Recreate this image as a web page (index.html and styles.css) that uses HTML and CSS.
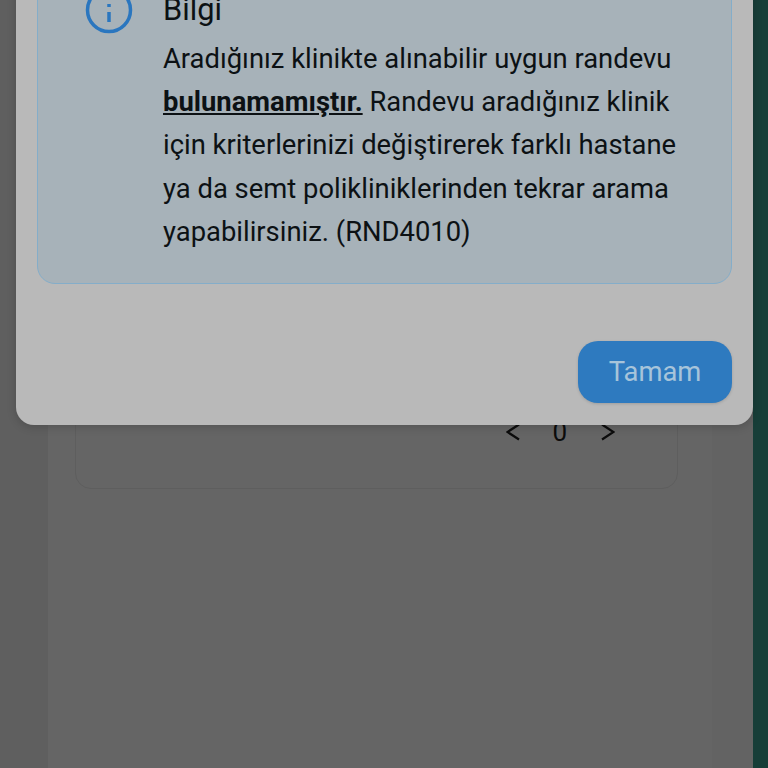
FILE: index.html
```html
<!DOCTYPE html>
<html lang="tr">
<head>
<meta charset="utf-8">
<title>Bilgi</title>
<link rel="stylesheet" href="styles.css">
</head>
<body>
<div class="screen">
  <div class="gutter"></div>
  <main class="main">
    <section class="card">
      <nav class="pager">
        <svg class="chev" viewBox="0 0 14 18" aria-hidden="true"><path d="M13 1.5 1.5 9 13 16.5"/></svg>
        <span class="page-num">0</span>
        <svg class="chev" viewBox="0 0 14 18" aria-hidden="true"><path d="M1 1.5 12.5 9 1 16.5"/></svg>
      </nav>
    </section>
  </main>
  <div class="gap"></div>
  <div class="strip"></div>

  <div class="dialog" role="dialog">
    <div class="info">
      <svg class="info-icon" viewBox="0 0 48 48" aria-hidden="true">
        <circle cx="24" cy="24" r="21.5"/>
        <path d="M24 26v10"/>
        <path d="M24 18v3"/>
      </svg>
      <div class="info-body">
        <h2 class="info-title">Bilgi</h2>
        <p class="info-text">Aradığınız klinikte alınabilir uygun randevu <strong>bulunamamıştır.</strong> Randevu aradığınız klinik için kriterlerinizi değiştirerek farklı hastane ya da semt polikliniklerinden tekrar arama yapabilirsiniz. (RND4010)</p>
      </div>
    </div>
    <div class="actions">
      <button class="btn" type="button">Tamam</button>
    </div>
  </div>
</div>
</body>
</html>
```

FILE: styles.css
```css
* { box-sizing: border-box; }
html, body { margin: 0; padding: 0; }
body { font-family: Roboto, "Noto Sans", sans-serif; background: #636363; }

.screen {
  position: relative;
  display: flex;
  width: 768px;
  height: 768px;
  overflow: hidden;
  background: #626262;
}
.gutter { width: 48px; flex: none; background: #5f5f5f; }
.main {
  width: 664px;
  flex: none;
  padding: 300px 34px 0 27px;
  background: #656565;
}
.gap { width: 41px; flex: none; background: #636363; }
.strip { width: 15px; flex: none; background: #173e38; }

.card {
  height: 189px;
  display: flex;
  justify-content: flex-end;
  align-items: flex-end;
  padding: 0 62px 44px 0;
  border: 1px solid #5e5e5e;
  border-radius: 16px;
}
.pager { display: flex; align-items: center; gap: 34px; color: #111; }
.chev { width: 14px; height: 18px; fill: none; stroke: #0c0c0c; stroke-width: 2.2; }
.page-num { margin-left: -2px; font-size: 26px; line-height: 24px; color: #0c0c0c; }

.dialog {
  position: absolute;
  left: 16px;
  right: 15px;
  bottom: 343px;
  padding: 40px 21px 22px;
  background: #b9b9b9;
  border-radius: 0 0 18px 18px;
  box-shadow: 0 2px 10px rgba(0, 0, 0, .18);
}
.info {
  display: flex;
  gap: 30px;
  padding: 20px 40px 29px 47px;
  background: #a7b2b9;
  border: 1.5px solid #84adc9;
  border-radius: 18px;
}
.info-icon {
  width: 48px;
  height: 48px;
  flex: none;
  margin-top: -7px;
  fill: none;
  stroke: #2a76bf;
  stroke-width: 3.5;
}
.info-body { min-width: 0; margin-top: -1px; }
.info-title {
  margin: 0 0 10px;
  font-size: 30.8px;
  line-height: 36px;
  font-weight: 400;
  color: #0c1114;
}
.info-text {
  margin: 0;
  font-size: 27.4px;
  line-height: 43.2px;
  color: #0c1114;
}
.info-text strong { font-weight: 700; text-decoration: underline; }

.actions { display: flex; justify-content: flex-end; margin-top: 57px; }
.btn {
  width: 154px;
  height: 62px;
  padding: 0 0 1px;
  border: 0;
  border-radius: 20px;
  background: #2e7abf;
  color: #a7c4da;
  font-family: inherit;
  font-size: 27.4px;
  box-shadow: 0 1px 3px rgba(0, 0, 0, .15);
}
```
